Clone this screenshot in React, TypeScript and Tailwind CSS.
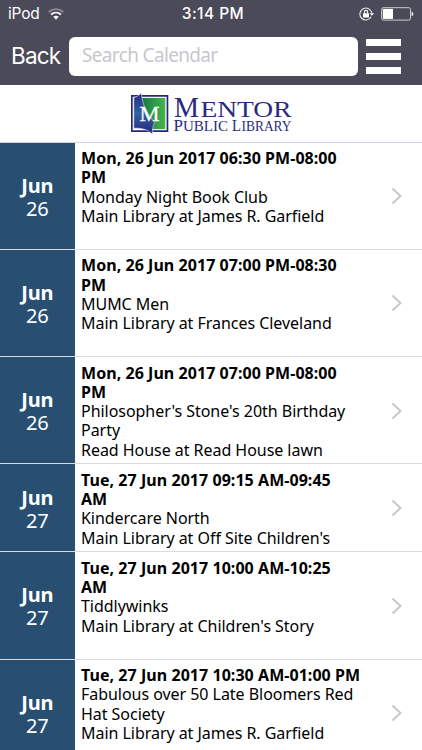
import React from "react";

interface CalendarEvent {
  id: number;
  month: string;
  day: number;
  time: string[];
  details: string[];
  height: string;
}

const events: CalendarEvent[] = [
  {
    id: 1,
    month: "Jun",
    day: 26,
    time: ["Mon, 26 Jun 2017 06:30 PM-08:00", "PM"],
    details: ["Monday Night Book Club", "Main Library at James R. Garfield"],
    height: "h-[107.3px]",
  },
  {
    id: 2,
    month: "Jun",
    day: 26,
    time: ["Mon, 26 Jun 2017 07:00 PM-08:30", "PM"],
    details: ["MUMC Men", "Main Library at Frances Cleveland"],
    height: "h-[107.3px]",
  },
  {
    id: 3,
    month: "Jun",
    day: 26,
    time: ["Mon, 26 Jun 2017 07:00 PM-08:00", "PM"],
    details: ["Philosopher's Stone's 20th Birthday", "Party", "Read House at Read House lawn"],
    height: "h-[107.3px]",
  },
  {
    id: 4,
    month: "Jun",
    day: 27,
    time: ["Tue, 27 Jun 2017 09:15 AM-09:45", "AM"],
    details: ["Kindercare North", "Main Library at Off Site Children's"],
    height: "h-[87.9px]",
  },
  {
    id: 5,
    month: "Jun",
    day: 27,
    time: ["Tue, 27 Jun 2017 10:00 AM-10:25", "AM"],
    details: ["Tiddlywinks", "Main Library at Children's Story"],
    height: "h-[107.3px]",
  },
  {
    id: 6,
    month: "Jun",
    day: 27,
    time: ["Tue, 27 Jun 2017 10:30 AM-01:00 PM"],
    details: ["Fabulous over 50 Late Bloomers Red", "Hat Society", "Main Library at James R. Garfield"],
    height: "h-[107.3px]",
  },
];

function WifiIcon() {
  return (
    <svg width="16" height="12" viewBox="0 0 16 12" fill="none">
      <path d="M.7 4C5 .1 11 .1 15.3 4" stroke="#8b8a96" strokeWidth="1.8" />
      <path d="M3.1 6.5c2.9-2.5 6.9-2.5 9.8 0" stroke="#fff" strokeWidth="1.9" />
      <path d="M5.2 8.8c1.6-1.5 4-1.5 5.6 0L8 11.7z" fill="#fff" />
    </svg>
  );
}

function RotationLockIcon() {
  return (
    <svg width="16" height="14" viewBox="0 0 16 14" fill="none">
      <path d="M12.2 9.8A6 6 0 1 1 12.8 6" stroke="#e8e8ec" strokeWidth="1.1" />
      <path d="M10.6 6.2h4.6l-2.3 2.6z" fill="#fff" />
      <rect x="4" y="6.2" width="6" height="4.3" rx=".5" fill="#fff" />
      <path d="M5.4 6.4V5a1.6 1.6 0 0 1 3.2 0v1.4" stroke="#fff" strokeWidth="1.1" />
    </svg>
  );
}

function BatteryIcon() {
  return (
    <svg width="33" height="14" viewBox="0 0 33 14" fill="none">
      <rect x=".6" y=".7" width="28.9" height="12.4" rx="1.6" stroke="#c9c9ce" />
      <rect x="1.8" y="1.9" width="10.2" height="10" fill="#fff" />
      <path d="M30.6 4.8c2.2.6 2.2 3.8 0 4.4z" fill="#fff" />
    </svg>
  );
}

function StatusBar() {
  return (
    <div className="grid h-7 grid-cols-3 items-center pl-[8px] pr-[8px] font-['Inter','Liberation_Sans',sans-serif] text-white">
      <div className="flex items-center gap-2 text-[15.5px] tracking-[-0.2px]">
        <span>iPod</span>
        <WifiIcon />
      </div>
      <div className="pl-1 text-center text-[15.5px] font-medium tracking-[0.45px]">3:14 PM</div>
      <div className="flex items-center justify-end gap-[6px]">
        <RotationLockIcon />
        <BatteryIcon />
      </div>
    </div>
  );
}

function SearchBar() {
  return (
    <div className="flex h-14 items-center pl-[11px]">
      <button className="w-[58px] text-left font-['Inter','Liberation_Sans',sans-serif] text-[22.5px] tracking-[-0.8px] text-white">
        Back
      </button>
      <input
        placeholder="Search Calendar"
        className="h-[39px] w-[289px] rounded-md bg-white px-[13px] pb-[3px] text-[19px] tracking-[-0.65px] placeholder:text-[#c7c7cd]"
      />
      <button className="ml-2 flex w-[35px] flex-col gap-[7px]">
        <span className="h-[7px] bg-white" />
        <span className="h-[7px] bg-white" />
        <span className="h-[7px] bg-white" />
      </button>
    </div>
  );
}

function LibraryLogo() {
  return (
    <svg width="164" height="43" viewBox="0 0 164 43" overflow="visible">
      <defs>
        <linearGradient id="leftPage" x1="0" y1="0" x2="0" y2="1">
          <stop offset="0" stopColor="#252a7d" />
          <stop offset="0.5" stopColor="#34619f" />
          <stop offset="1" stopColor="#28277a" />
        </linearGradient>
        <linearGradient id="rightPage" x1="0" y1="0" x2="1" y2="0">
          <stop offset="0" stopColor="#157a45" />
          <stop offset="1" stopColor="#46b64b" />
        </linearGradient>
      </defs>
      <path d="M2 3h37.3v37H2z" fill="#27277c" />
      <path d="M3.7 4.7h33.9v33.6H3.7z" fill="#fff" />
      <path d="M13 5.9h23.3v31.2H13z" fill="url(#rightPage)" />
      <path d="M4.8 5.4C8 5 10 3.4 12.2 1c1.4 13 5.8 20 13.3 29.5-1.6 3.5-2.3 7.5-2.3 11.7C19 37.5 13 36 4.8 36.2z" fill="url(#leftPage)" stroke="#fff" strokeWidth=".5" />
      <text x="10.5" y="29.3" textLength="20" lengthAdjust="spacingAndGlyphs" fontFamily="Liberation Serif, serif" fontSize="21.5" fill="#fff" stroke="#fff" strokeWidth=".3">M</text>
      <g fontFamily="Liberation Serif, serif" fill="#2b2a7c">
        <text x="45" y="24.5" fontSize="29.5" textLength="25" lengthAdjust="spacingAndGlyphs">M</text>
        <text x="71.5" y="24.5" fontSize="24" textLength="91" lengthAdjust="spacingAndGlyphs">ENTOR</text>
        <text x="44.5" y="38.8" fontSize="17">P</text>
        <text x="54" y="38.8" fontSize="14.5" textLength="45" lengthAdjust="spacingAndGlyphs">UBLIC</text>
        <text x="103" y="38.8" fontSize="17" textLength="9" lengthAdjust="spacingAndGlyphs">L</text>
        <text x="112.5" y="38.8" fontSize="14.5" textLength="50" lengthAdjust="spacingAndGlyphs">IBRARY</text>
      </g>
    </svg>
  );
}

function EventRow({ event }: { event: CalendarEvent }) {
  return (
    <li className={`${event.height} flex shrink-0 border-b border-[#dcdce0] bg-white`}>
      <div className="flex w-[74.5px] shrink-0 flex-col items-center justify-center bg-[#284f72] pt-[2px] text-[20px] leading-[23px] tracking-[-0.2px] text-white">
        <span className="font-bold">{event.month}</span>
        <span>{event.day}</span>
      </div>
      <div className="flex-1 whitespace-nowrap pl-[6.5px] pt-[6.5px] text-[16px] leading-[19.3px] text-black">
        {event.time.map((line) => (
          <p key={line} className="font-bold tracking-[0.05px]">{line}</p>
        ))}
        {event.details.map((line) => (
          <p key={line} className="tracking-[-0.04px]">{line}</p>
        ))}
      </div>
      <div className="flex items-center pr-[19px] pt-px">
        <svg width="12" height="18" viewBox="0 0 12 18" fill="none" stroke="#c7c7cc" strokeWidth="2">
          <path d="M1.5 1.5L9.5 9l-8 7.5" />
        </svg>
      </div>
    </li>
  );
}

export default function App() {
  return (
    <div className="flex h-[750px] w-[422px] flex-col overflow-hidden bg-white font-['Noto_Sans','Open_Sans',sans-serif]">
      <header className="h-[84.5px] shrink-0 bg-[#4b4a59]">
        <StatusBar />
        <SearchBar />
      </header>
      <div className="flex h-[58px] shrink-0 items-center justify-center border-b border-[#d5d5e2]">
        <LibraryLogo />
      </div>
      <ul>
        {events.map((event) => (
          <EventRow key={event.id} event={event} />
        ))}
      </ul>
    </div>
  );
}
